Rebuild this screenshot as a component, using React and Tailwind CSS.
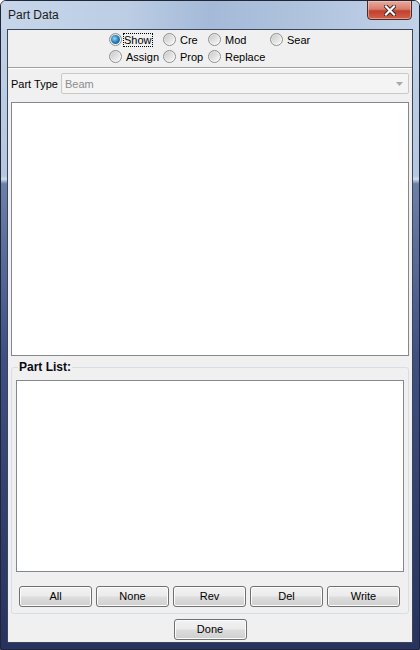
import React from 'react';

const Radio = ({ checked }) => (
  <span className="relative inline-flex h-[13px] w-[13px] shrink-0 items-center justify-center rounded-full border border-[#8e8f8f] bg-[linear-gradient(135deg,#d4d4d4_0%,#f4f4f4_60%,#ffffff_100%)]">
    <span className="h-[9px] w-[9px] rounded-full bg-[linear-gradient(135deg,#cbcbcb,#f6f6f6)]">
      {checked && (
        <span className="block h-[9px] w-[9px] rounded-full bg-[radial-gradient(circle_at_40%_40%,#9fd6f5_0%,#2a86c4_45%,#10446e_100%)]" />
      )}
    </span>
  </span>
);

const RadioItem = ({ label, checked, focused, width }) => (
  <label className={`flex h-[17px] items-center gap-[1px] ${width}`}>
    <Radio checked={checked} />
    <span className={`border leading-[12px] ${focused ? 'border-dotted border-black' : 'border-transparent pl-[2px]'}`}>{label}</span>
  </label>
);

const Button = ({ children }) => (
  <button className="h-[21px] w-[73px] rounded-[3px] border border-[#707070] bg-[linear-gradient(to_bottom,#f2f2f2_0%,#ebebeb_48%,#dddddd_52%,#cfcfcf_100%)] text-[11px] text-black shadow-[inset_0_0_0_1px_#fcfcfc]">
    {children}
  </button>
);

const App = () => {
  return (
    <div className="flex h-[650px] w-[420px] flex-col overflow-hidden rounded-t-[6px] border border-[#1f2636] bg-[linear-gradient(to_bottom,#c3d3e8_0%,#b4c7e0_27%,#cfdcec_27.5%,#6b80a9_28.2%,#3e4f82_55%,#27325e_100%)] font-['Liberation_Sans',Arial,sans-serif]">
      {/* Title bar */}
      <div className="relative flex h-[28px] shrink-0 items-center bg-[linear-gradient(to_right,#c7d6ea_0%,#bccde4_30%,#a4bad8_50%,#aec2dd_70%,#c2d2e8_100%)] pl-[7px] text-[12px] text-[#1b1b1b]">
        Part Data
        <div className="absolute right-[7px] top-[-1px] flex h-[20px] w-[45px] items-center justify-center rounded-b-[4px] border border-[#4b2a28] bg-[linear-gradient(to_bottom,#e9aa9c_0%,#d88070_45%,#c0402e_55%,#d2624a_100%)] shadow-[inset_0_0_0_1px_rgba(255,210,200,0.5)]">
          <svg width="12" height="11" viewBox="0 0 12 11">
            <path d="M2 1.5 L10 9.5 M10 1.5 L2 9.5" stroke="#3a2020" strokeWidth="4" strokeLinecap="square" />
            <path d="M2 1.5 L10 9.5 M10 1.5 L2 9.5" stroke="#ffffff" strokeWidth="2.2" strokeLinecap="square" />
          </svg>
        </div>
      </div>

      {/* Client area */}
      <div className="mx-[6px] mb-[6px] flex flex-1 flex-col border border-[#3a4658] bg-[#f0f0f0] text-[11px] text-black">
        {/* Mode radios */}
        <div className="pl-[101px] pt-[1px]">
          <div className="flex">
            <RadioItem label="Show" checked focused width="w-[54px]" />
            <RadioItem label="Cre" width="w-[45px]" />
            <RadioItem label="Mod" width="w-[62px]" />
            <RadioItem label="Sear" width="w-[50px]" />
          </div>
          <div className="flex">
            <RadioItem label="Assign" width="w-[54px]" />
            <RadioItem label="Prop" width="w-[45px]" />
            <RadioItem label="Replace" width="w-[62px]" />
          </div>
        </div>
        <div className="mt-[2px] border-t border-b border-t-[#a0a0a0] border-b-white" />

        {/* Part type */}
        <div className="mt-[4px] flex items-center pl-[3px] pr-[3px]">
          <span className="w-[50px] pt-[1px]">Part Type</span>
          <div className="flex h-[21px] flex-1 items-center justify-between rounded-[2px] border border-[#c9c9c9] bg-[#f4f4f4] pl-[3px] pr-[5px] pt-[1px] text-[#8d8d8d]">
            <span>Beam</span>
            <svg width="7" height="4" viewBox="0 0 7 4">
              <path d="M0 0 H7 L3.5 4 Z" fill="#a8a8a8" />
            </svg>
          </div>
        </div>

        {/* Main area */}
        <div className="mx-[3px] mt-[8px] h-[254px] border border-[#828790] bg-white" />

        {/* Part list group */}
        <div className="relative mx-[3px] mt-[11px] rounded-[3px] border border-[#d5dfe5] px-[4px] pb-[6px] pt-[12px]">
          <span className="absolute left-[6px] top-[-8px] bg-[#f0f0f0] px-[1px] text-[12px] font-bold leading-[14px] text-[#0a0a14]">
            Part List:
          </span>
          <div className="h-[192px] border border-[#828790] bg-white" />
          <div className="mt-[14px] flex gap-[4px] pl-[3px]">
            <Button>All</Button>
            <Button>None</Button>
            <Button>Rev</Button>
            <Button>Del</Button>
            <Button>Write</Button>
          </div>
        </div>

        <div className="mt-[5px] flex justify-center">
          <Button>Done</Button>
        </div>
      </div>
    </div>
  );
};

export default App;
